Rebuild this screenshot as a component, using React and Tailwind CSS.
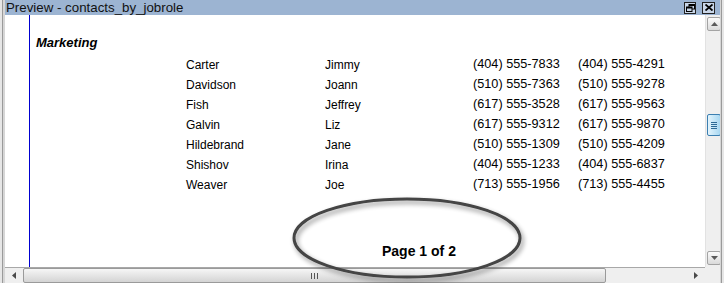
import React from 'react'

const rows = [
  ['Carter', 'Jimmy', '(404) 555-7833', '(404) 555-4291'],
  ['Davidson', 'Joann', '(510) 555-7363', '(510) 555-9278'],
  ['Fish', 'Jeffrey', '(617) 555-3528', '(617) 555-9563'],
  ['Galvin', 'Liz', '(617) 555-9312', '(617) 555-9870'],
  ['Hildebrand', 'Jane', '(510) 555-1309', '(510) 555-4209'],
  ['Shishov', 'Irina', '(404) 555-1233', '(404) 555-6837'],
  ['Weaver', 'Joe', '(713) 555-1956', '(713) 555-4455'],
]

function ArrowBtn({ dir }) {
  // small win7-style scroll button
  return (
    <div className="w-[14px] h-[14px] ml-[1px] rounded-[2px] border border-[#a3a3a3] bg-gradient-to-b from-[#fbfbfb] to-[#dadada] flex items-center justify-center">
      <svg width="7" height="4" viewBox="0 0 7 4">
        {dir === 'up'
          ? <path d="M0 4 L3.5 0 L7 4 Z" fill="#5a5a5a" />
          : <path d="M0 0 L3.5 4 L7 0 Z" fill="#5a5a5a" />}
      </svg>
    </div>
  )
}

export default function App() {
  return (
    <div className="relative w-[724px] h-[283px] overflow-hidden flex bg-white font-['Liberation_Sans',sans-serif] text-black">
      {/* left frame */}
      <div className="w-[5px] h-full flex">
        <div className="w-[2px] bg-[#e6e6e6]" />
        <div className="w-[1px] bg-[#9a9a9a]" />
        <div className="w-[2px] bg-[#d6d6d6]" />
      </div>

      {/* main column */}
      <div className="w-[715px] h-full flex flex-col">
        {/* title bar */}
        <div className="h-[15px] bg-[#9cb4d2] flex items-center justify-between">
          <span className="pl-[1px] text-[13.3px] leading-[15px] text-[#111]">Preview - contacts_by_jobrole</span>
          <div className="flex items-center gap-[6px] pr-[5px]">
            <div className="w-[12px] h-[12px] border border-[#222] bg-[#c9d6e8] flex items-center justify-center">
              <svg width="9" height="8" viewBox="0 0 9 8">
                <rect x="3" y="0.5" width="5.5" height="4.5" fill="none" stroke="#000" strokeWidth="1" />
                <rect x="0.5" y="3" width="5.5" height="4.5" fill="#c9d6e8" stroke="#000" strokeWidth="1" />
                <rect x="0.5" y="3" width="5.5" height="1.5" fill="#000" />
                <rect x="3" y="0.5" width="5.5" height="1.5" fill="#000" />
              </svg>
            </div>
            <div className="w-[13px] h-[12px] border border-[#222] bg-[#c9d6e8] flex items-center justify-center">
              <svg width="8" height="7" viewBox="0 0 8 7">
                <path d="M0.5 0.5 L7.5 6.5 M7.5 0.5 L0.5 6.5" stroke="#000" strokeWidth="1.8" />
              </svg>
            </div>
          </div>
        </div>

        {/* body */}
        <div className="h-[252px] flex">
          <div className="w-[700px] h-full flex">
            <div className="w-[24px]" />
            <div className="w-[1px] h-full bg-[#0000d0]" />
            <div className="pl-[6px] pt-[20px] flex flex-col">
              <div className="text-[13px] leading-[16px] font-bold italic">Marketing</div>
              <div className="mt-[4px] flex flex-col">
                {rows.map(r => (
                  <div key={r[0]} className="h-[20px] flex items-center text-[12px]">
                    <span className="w-[150px]" />
                    <span className="w-[139px]">{r[0]}</span>
                    <span className="w-[148px]">{r[1]}</span>
                    <span className="w-[105px] text-[12.7px]">{r[2]}</span>
                    <span className="text-[12.7px]">{r[3]}</span>
                  </div>
                ))}
              </div>
              <div className="mt-[48px] pl-[346px] text-[14px] leading-[17px] font-bold">Page 1 of 2</div>
            </div>
          </div>

          {/* vertical scrollbar */}
          <div className="w-[15px] h-full bg-[#efefef] border-l border-[#e2e2e2] flex flex-col pt-[2px]">
            <ArrowBtn dir="up" />
            <div className="h-[83px]" />
            <div className="w-[14px] h-[22px] ml-[1px] rounded-[2px] border border-[#3c7fb1] bg-gradient-to-r from-[#e3f4fc] to-[#a9d8f2] flex flex-col items-center justify-center gap-[1px]">
              <div className="w-[6px] h-[1px] bg-[#2d6a96]" />
              <div className="w-[6px] h-[1px] bg-[#2d6a96]" />
              <div className="w-[6px] h-[1px] bg-[#2d6a96]" />
              <div className="w-[6px] h-[1px] bg-[#2d6a96]" />
            </div>
            <div className="h-[115px]" />
            <ArrowBtn dir="down" />
          </div>
        </div>

        {/* horizontal scrollbar */}
        <div className="h-[16px] flex">
          <div className="w-[700px] h-full bg-[#efefef] border-t border-[#a8a8a8] flex items-center">
            <div className="w-[18px] flex justify-center">
              <svg width="4" height="7" viewBox="0 0 4 7"><path d="M4 0 L0 3.5 L4 7 Z" fill="#4a4a4a" /></svg>
            </div>
            <div className="w-[583px] h-[15px] rounded-[2px] border border-[#9a9a9a] bg-gradient-to-b from-[#f6f6f6] to-[#d4d4d4] flex items-center justify-center gap-[2px]">
              <div className="w-[1px] h-[6px] bg-[#555]" />
              <div className="w-[1px] h-[6px] bg-[#555]" />
              <div className="w-[1px] h-[6px] bg-[#555]" />
            </div>
            <div className="flex-1 flex justify-end pr-[7px]">
              <svg width="4" height="7" viewBox="0 0 4 7"><path d="M0 0 L4 3.5 L0 7 Z" fill="#4a4a4a" /></svg>
            </div>
          </div>
          <div className="w-[15px] h-full bg-[#efefef]" />
        </div>
      </div>

      {/* right frame */}
      <div className="w-[4px] h-full flex">
        <div className="w-[1px] bg-[#d6d6d6]" />
        <div className="w-[1px] bg-[#9a9a9a]" />
        <div className="w-[2px] bg-[#e6e6e6]" />
      </div>

      {/* annotation ellipse */}
      <svg className="absolute left-[288px] top-[192px] overflow-visible" width="240" height="92" viewBox="0 0 240 92">
        <defs>
          <filter id="sh" x="-20%" y="-40%" width="140%" height="180%">
            <feGaussianBlur in="SourceAlpha" stdDeviation="2.5" />
            <feOffset dx="2" dy="3" result="b" />
            <feComponentTransfer><feFuncA type="linear" slope="0.45" /></feComponentTransfer>
            <feMerge><feMergeNode /><feMergeNode in="SourceGraphic" /></feMerge>
          </filter>
        </defs>
        <ellipse cx="119" cy="46" rx="113" ry="39" fill="none" stroke="#444" strokeWidth="3" filter="url(#sh)" />
      </svg>
    </div>
  )
}
